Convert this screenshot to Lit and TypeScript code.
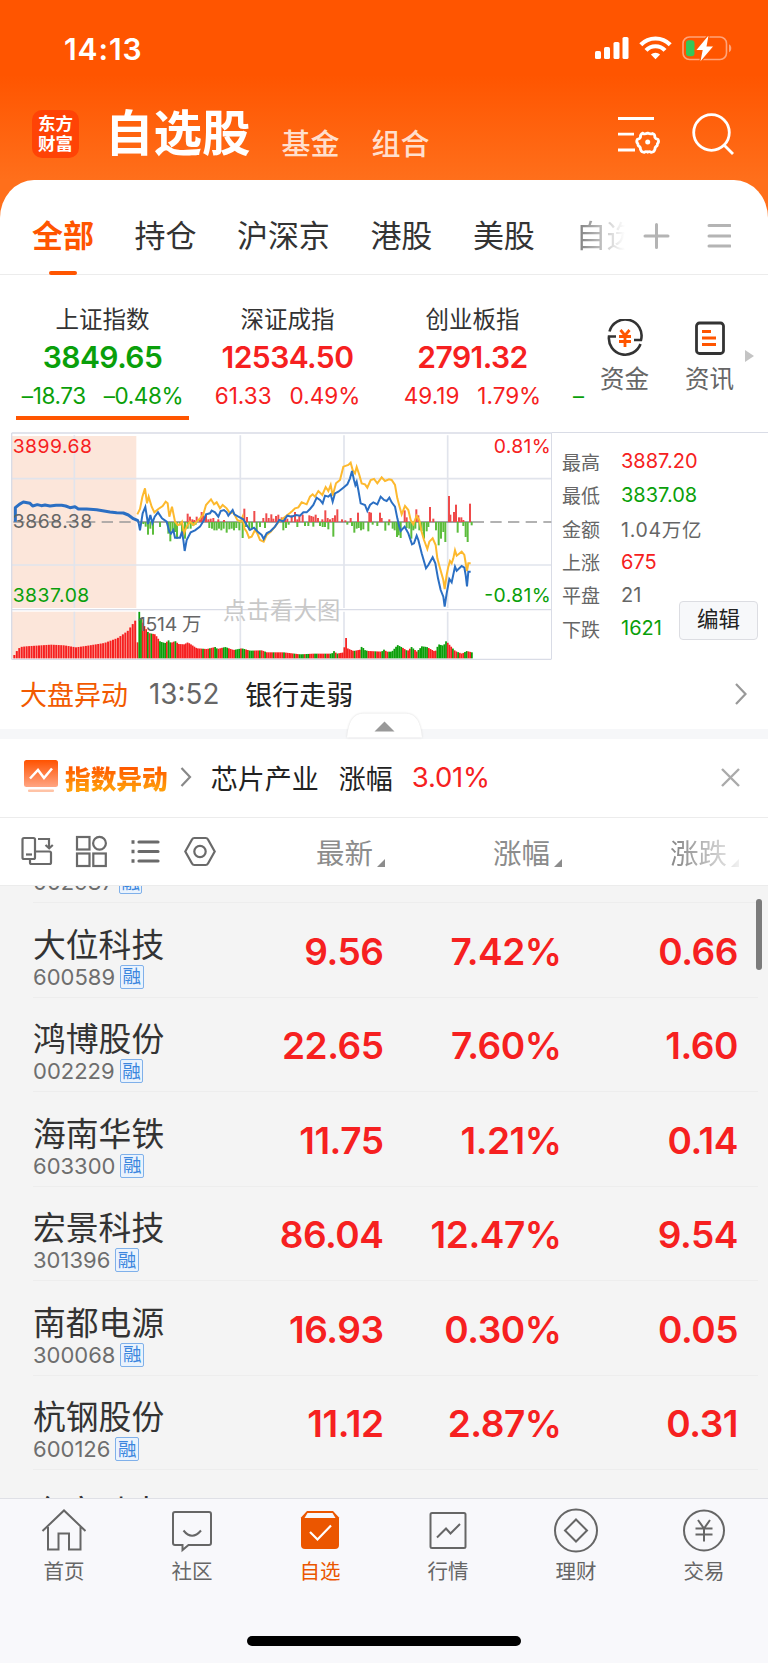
import { LitElement, html, svg, css } from "lit";
import { customElement } from "lit/decorators.js";

const sharedText = css`
  :host { font-family: Inter, "Noto Sans CJK SC", sans-serif; }
  .up { color: #f62020; }
  .down { color: #0a9f0a; }
`;

type Pair = [number, number];

const PRE_LINE = "46,290 46,248 58,238 70,231 90,235 98,243 112,239 124,242 135,240 150,243 168,241 185,241 197,243 210,248 225,245 235,252 260,252 290,254 330,261 350,263 370,264 385,270 400,281 414,287";
const BLUE_LINE = "414,284 420,316 428,265 436,246 444,297 451,270 457,294 464,275 474,262 486,280 500,290 508,320 513,326 520,315 525,338 540,338 546,320 550,345 554,378 560,345 572,322 585,316 600,305 612,285 618,268 630,265 635,257 645,262 655,275 662,258 672,255 680,262 685,272 698,255 703,268 715,275 730,283 740,300 750,315 762,308 775,322 785,330 791,342 800,325 812,318 825,305 838,285 850,289 862,272 875,275 888,270 900,272 910,262 920,262 930,252 940,240 950,218 960,225 968,235 975,212 985,215 992,208 998,230 1005,205 1015,200 1030,188 1042,178 1050,160 1056,138 1062,165 1066,180 1070,170 1075,195 1082,235 1095,240 1102,258 1110,240 1120,232 1132,238 1142,215 1152,225 1160,228 1168,218 1175,232 1185,245 1192,280 1198,305 1202,318 1214,305 1225,325 1236,358 1242,355 1250,332 1255,345 1265,385 1278,430 1285,420 1298,397 1306,415 1314,460 1322,495 1330,515 1334,545 1340,505 1348,462 1355,472 1365,425 1370,437 1385,423 1393,428 1397,450 1401,484 1405,440 1412,440";
const GOLD_LINE = "412,268 420,252 427,216 435,190 441,235 446,215 455,245 463,262 475,252 488,243 497,230 503,235 508,275 516,245 525,290 533,300 540,298 546,290 552,325 560,305 570,290 580,300 590,290 600,280 610,268 618,240 625,232 633,223 642,238 650,232 660,250 668,240 680,250 690,265 700,262 712,285 722,290 728,275 733,310 740,320 747,338 755,335 765,315 772,325 780,345 791,350 800,330 812,320 825,305 838,288 850,280 862,270 870,264 877,258 885,250 895,247 905,232 920,238 930,215 938,208 945,215 955,198 967,210 977,186 985,198 992,180 998,212 1008,175 1020,165 1030,125 1045,120 1052,113 1058,135 1065,145 1070,126 1078,150 1085,175 1095,178 1102,188 1112,165 1122,162 1132,175 1145,157 1155,168 1167,163 1175,165 1185,180 1192,220 1200,250 1205,268 1215,243 1225,255 1232,285 1240,298 1250,272 1258,285 1265,320 1272,345 1282,372 1288,350 1298,340 1307,360 1312,400 1320,430 1330,465 1334,492 1340,450 1345,425 1350,408 1355,415 1360,400 1365,376 1370,392 1385,380 1393,390 1401,438 1405,415 1412,415";

const FLOW: Pair[] = [
  [563,25],[570,16],[577,8],[583,6],[590,16],[600,8],[605,30],[610,20],[618,24],[625,8],[632,10],[640,12],[655,8],[672,6],[720,6],[733,40],[741,15],[763,33],[790,12],[799,26],[806,12],[814,23],[820,10],[828,18],[835,22],[845,14],[855,15],[862,10],[875,20],
  [430,-6],[437,-14],[444,-38],[451,-20],[459,-38],[480,-15],[505,-35],[511,-58],[518,-25],[525,-30],[531,-50],[540,-10],[546,-35],[555,-50],[563,-20],[572,-20],[580,-12],[587,-8],[628,-18],[636,-20],[643,-25],[650,-25],[657,-20],[664,-25],[671,-20],[680,-32],[688,-22],[695,-20],[702,-25],[709,-18],[718,-25],[728,-48],[738,-15],[748,-25],[756,-20],[770,-30],[780,-15],[795,-18],[850,-25],[858,-18],[866,-8],[892,-15],
  [885,30],[892,8],[898,18],[908,22],[928,20],[934,18],[940,16],[947,22],[954,12],[967,8],[976,35],[983,12],[990,8],[998,12],[1005,20],[1012,38],[1026,8],[1036,5],[1052,12],[1074,28],[1108,30],[1113,28],[1140,28],[1145,12],[1168,8],[1214,35],[1220,14],[1249,38],[1255,20],[1290,45],[1300,10],[1347,78],[1351,22],[1362,30],[1368,52],[1377,14],[1384,14],[1390,6],[1410,55],
  [915,-12],[925,-12],[940,-14],[960,-12],[968,-15],[975,-15],[985,-22],[1000,-44],[1042,-8],[1056,-12],[1063,-32],[1070,-20],[1076,-18],[1083,-25],[1090,-22],[1105,-28],[1118,-8],[1132,-12],[1156,-26],[1166,-10],[1178,-20],[1184,-25],[1191,-45],[1196,-40],[1202,-48],[1220,-18],[1228,-20],[1234,-50],[1240,-25],[1246,-20],[1258,-25],[1265,-28],[1272,-50],[1280,-28],[1285,-15],[1308,-25],[1316,-70],[1323,-50],[1330,-30],[1336,-60],[1373,-32],[1390,-12],[1397,-45],[1403,-60],[1415,-10],
];

const PRE_VOLUME: Pair[] = [[40,10],[50,26],[58,34],[75,36],[150,41],[190,39],[225,33],[260,38],[310,46],[350,61],[380,82],[407,119]];
const VOLUME: Pair[] = [[412,48],[417,140],[425,112],[435,92],[445,76],[465,72],[480,50],[495,46],[505,54],[512,46],[525,52],[535,43],[552,42],[563,48],[590,30],[620,28],[645,34],[652,28],[675,34],[700,25],[725,30],[750,23],[785,24],[800,18],[850,18],[900,12],[940,14],[995,14],[1001,22],[1010,14],[1031,18],[1036,72],[1042,30],[1060,22],[1080,26],[1085,36],[1095,24],[1105,22],[1145,20],[1150,27],[1160,20],[1175,20],[1192,40],[1207,32],[1222,22],[1234,34],[1250,20],[1265,36],[1280,34],[1305,20],[1315,42],[1330,38],[1338,52],[1350,38],[1365,22],[1385,14],[1400,22],[1415,18]];
const GREEN_RUNS: Pair[] = [[415,427],[435,438],[442,446],[452,456],[478,500],[505,514],[523,528],[553,557],[608,612],[628,633],[645,655],[667,682],[705,720],[726,735],[745,760],[775,781],[790,796],[818,824],[848,856],[880,884],[896,912],[918,925],[945,955],[975,980],[990,1003],[1010,1014],[1062,1068],[1080,1102],[1125,1130],[1145,1152],[1165,1207],[1218,1222],[1230,1240],[1255,1282],[1310,1338],[1358,1362],[1372,1376],[1392,1403],[1412,1420]];

function heightAt(series: Pair[], x: number): number {
  for (let i = 1; i < series.length; i++) {
    const [x1, h1] = series[i];
    if (x <= x1) {
      const [x0, h0] = series[i - 1];
      return h0 + ((h1 - h0) * (x - x0)) / (x1 - x0);
    }
  }
  return series[series.length - 1][1];
}

function steps(from: number, to: number, step: number): number[] {
  const out: number[] = [];
  for (let x = from; x <= to; x += step) out.push(x);
  return out;
}

@customElement("minute-chart")
class MinuteChart extends LitElement {
  static styles = css`
    :host { display: block; width: 543px; height: 228px; font-family: Inter, "Noto Sans CJK SC", sans-serif; }
    svg { display: block; }
    .grid { stroke: #e1e4ec; stroke-width: 5; }
    .axis { stroke: #d9dce6; stroke-width: 4; }
    .label { font-size: 58px; }
    .mark { font-size: 70px; fill: #c8c8c8; }
    .up { fill: #f62020; }
    .down { fill: #0a9f0a; }
    .plain { fill: #666; }
  `;
  render() {
    return html`<svg width="543" height="228" viewBox="27 21 1629 684">
      <rect x="36" y="33" width="373" height="516" fill="#fce6da"/>
      <rect x="36" y="560" width="373" height="140" fill="#fce6da"/>
      ${[223, 721, 1032, 1343].map((x) => svg`<path class="grid" d=${`M${x} 31V549M${x} 560V700`}/>`)}
      ${[161, 420].map((y) => svg`<path class="grid" d=${`M35 ${y}H1654`}/>`)}
      <path class="axis" d="M35 24H1656M35 554H1654M35 703H1654M35 24V703M1655 24V703"/>
      <path d="M40 291H414" stroke="#999" stroke-width="5" stroke-dasharray="34 19"/>
      <path d="M414 291H1418" stroke="#888" stroke-width="4"/>
      <path d="M1418 291H1654" stroke="#999" stroke-width="5" stroke-dasharray="34 19"/>
      ${FLOW.map(([x, v]) => svg`<rect x=${x - 3} y=${v > 0 ? 291 - v : 291} width="6" height=${Math.abs(v)} fill=${v > 0 ? "#ef4b4b" : "#5cbd3c"}/>`)}
      ${steps(40, 403, 7.4).map((x) => svg`<rect x=${x} y=${700 - heightAt(PRE_VOLUME, x)} width="6" height=${heightAt(PRE_VOLUME, x)} fill="#f62020"/>`)}
      ${steps(410, 1415, 5.17).map((x) => {
        const h = heightAt(VOLUME, x + 2);
        const green = GREEN_RUNS.some(([a, b]) => x + 2.5 >= a && x + 2.5 <= b);
        return svg`<rect x=${x} y=${700 - h} width="5.3" height=${h} fill=${green ? "#0a9f0a" : "#f62020"}/>`;
      })}
      <polyline points=${GOLD_LINE} fill="none" stroke="#fdb92e" stroke-width="6"/>
      <polyline points=${BLUE_LINE} fill="none" stroke="#2b6fc3" stroke-width="6"/>
      <polyline points=${PRE_LINE} fill="none" stroke="#2b6fc3" stroke-width="9" stroke-linejoin="round"/>
      <text class="label up" x="38" y="84" textLength="238">3899.68</text>
      <text class="label plain" x="38" y="308" textLength="239">3868.38</text>
      <text class="label down" x="38" y="532" textLength="230">3837.08</text>
      <text class="label up" x="1481" y="84" textLength="171">0.81%</text>
      <text class="label down" x="1453" y="532" textLength="199">-0.81%</text>
      <text class="label plain" x="414" y="618" textLength="190">1514 万</text>
      <text class="mark" x="669" y="582" textLength="352">点击看大图</text>
    </svg>`;
  }
}

@customElement("status-header")
class StatusHeader extends LitElement {
  static styles = [sharedText, css`
    :host { display: block; color: #fff; height: 180px; }
    .status { display: flex; justify-content: space-between; align-items: center; height: 98px; padding: 0 36px 0 64px; box-sizing: border-box; }
    .time { font-size: 30px; font-weight: 600; letter-spacing: 0.9px; }
    .bar { display: flex; align-items: flex-end; height: 62px; padding: 0 32px; }
    .logo { width: 47px; height: 48px; border-radius: 10px; background: #ff4306; display: grid; place-content: center; font-size: 17.5px; line-height: 20px; font-weight: 700; margin-bottom: 2px; }
    .title { font-size: 48.500px; line-height: 52px; font-weight: 700; margin-left: 26px; }
    .link { font-size: 29px; line-height: 30px; font-weight: 500; color: #ffdfcd; margin-left: 32px; }
    .title + .link { margin-left: 31px; }
    .tools { margin-left: auto; margin-bottom: 5px; }
    svg { display: block; }
  `];
  render() {
    return html`
      <div class="status">
        <span class="time">14:13</span>
        <svg width="138" height="26" viewBox="0 0 138 26" fill="#fff">
          <rect x="1" y="15" width="6" height="8" rx="1.6"/><rect x="10" y="11" width="6" height="12" rx="1.6"/>
          <rect x="19.500" y="6" width="6" height="17" rx="1.6"/><rect x="28.500" y="1" width="6" height="22" rx="1.6"/>
          <g fill="none" stroke="#fff" stroke-width="4.200">
            <path d="M46.800 8.700a20.500 20.500 0 0 1 29.400 0"/><path d="M52 14.400a13 13 0 0 1 19 0"/>
          </g>
          <path d="M61.500 23.200l-4.600-4.600a6.700 6.700 0 0 1 9.200 0z"/>
          <rect x="89" y="1" width="43.500" height="22.500" rx="6.500" fill="none" stroke="#ffa47a" stroke-width="1.600"/>
          <path d="M135 8.300c3 1.200 3 6.800 0 8z" fill="#ffa47a"/>
          <rect x="92" y="4.300" width="8.500" height="16" rx="3" fill="#34c759"/>
          <path d="M114.500-.5l-12 14.500h6.200l-2.200 11.200 12.500-14.700h-6.500z" stroke="#ff5a02" stroke-width="2.400" paint-order="stroke"/>
        </svg>
      </div>
      <div class="bar">
        <div class="logo"><span>东方</span><span>财富</span></div>
        <span class="title">自选股</span><span class="link">基金</span><span class="link">组合</span>
        <svg class="tools" width="118" height="42" viewBox="0 0 118 42" fill="none" stroke="#fff" stroke-width="2.800">
          <path d="M0 5.500H36M0 21.200H16M0 37H17"/>
          <path d="M24.800 20.500q2.200 1 4.900-.4 2.700 1.400 4.900.4 2.500.7 2.300 4 .6 1.400 3 1.800 1.500 2.700-.5 4.500.1 1-.4 2-2 .6-2.100 3.600-1 3-3.700 2.900-1.800-1.300-3.500-.1-1.800-1.200-3.500.1-2.700.1-3.700-2.900 0-3-2.100-3.600-.6-1-.5-2-2-1.800-.5-4.500 2.400-.4 3-1.800-.2-3.300 2.400-4.400z" stroke-linejoin="round"/>
          <circle cx="29.700" cy="29" r="2.500" fill="#fff" stroke="none"/>
          <circle cx="93.500" cy="19.500" r="17.800"/><path d="M106 32l9 9"/>
        </svg>
      </div>`;
  }
}

@customElement("group-tabs")
class GroupTabs extends LitElement {
  static styles = [sharedText, css`
    :host { display: flex; align-items: center; height: 95px; box-sizing: border-box; border-bottom: 1.500px solid #ececec; padding: 0 36px 0 32px; background: #fff; border-radius: 34px 34px 0 0 / 38px 38px 0 0; color: #333; font-size: 31px; line-height: 44px; }
    .tab { margin-right: 40.700px; letter-spacing: -0.1px; height: 95px; padding-top: 34px; box-sizing: border-box; display: flex; flex-direction: column; align-items: center; }
    .on { color: #ff5500; font-weight: 700; }
    .on::after { content: ""; width: 28px; height: 4px; border-radius: 2px; background: #ff5500; margin-top: 13px; }
    .faded { width: 50px; margin-right: 18px; overflow: hidden; white-space: nowrap; align-items: flex-start; background: linear-gradient(90deg, #777, #fff); -webkit-background-clip: text; background-clip: text; color: transparent; }
    .actions { margin-top: 17px; }
  `];
  render() {
    return html`
      <span class="tab on">全部</span><span class="tab">持仓</span><span class="tab">沪深京</span>
      <span class="tab">港股</span><span class="tab">美股</span><span class="tab faded">自选</span>
      <svg class="actions" width="88" height="28" viewBox="0 0 88 28" fill="none" stroke="#b4b4b4" stroke-width="3" stroke-linecap="round">
        <path d="M2 14H25M13.500 2.500V25.500M66 3.500H87M66 14H87M66 24H87"/>
      </svg>`;
  }
}

const INDICES = [
  { name: "上证指数", value: "3849.65", diff: "–18.73", pct: "–0.48%", dir: "down", on: true },
  { name: "深证成指", value: "12534.50", diff: "61.33", pct: "0.49%", dir: "up", on: false },
  { name: "创业板指", value: "2791.32", diff: "49.19", pct: "1.79%", dir: "up", on: false },
];

@customElement("index-strip")
class IndexStrip extends LitElement {
  static styles = [sharedText, css`
    :host { display: flex; height: 157px; padding: 0 14px 0 16px; box-sizing: border-box; }
    .card { width: 173px; margin-right: 12px; padding-top: 29px; height: 145px; box-sizing: border-box; display: flex; flex-direction: column; align-items: center; white-space: nowrap; border-bottom: 4px solid transparent; }
    .sel { border-color: #ff5500; }
    .name { font-size: 23.500px; line-height: 32px; color: #333; }
    .value { font-size: 30px; line-height: 40px; font-weight: 600; margin-top: 1px; letter-spacing: -0.55px; }
    .delta { display: flex; gap: 18px; font-size: 22.500px; line-height: 30px; margin-top: 4px; }
    .delta.down { letter-spacing: -0.4px; }
    .cut { width: 10px; font-size: 22px; line-height: 30px; margin: 106px 0 0 2px; }
    .tool { display: flex; flex-direction: column; align-items: center; gap: 4px; margin-top: 44px; font-size: 24.500px; line-height: 36px; color: #666; }
    .tools { display: flex; gap: 36px; margin-left: 17px; }
    .next { margin: 75px 0 0 auto; }
    svg { display: block; }
  `];
  render() {
    return html`
      ${INDICES.map((i) => html`<div class="card ${i.on ? "sel" : ""}">
        <span class="name">${i.name}</span><span class="value ${i.dir}">${i.value}</span>
        <span class="delta ${i.dir}"><span>${i.diff}</span><span>${i.pct}</span></span>
      </div>`)}
      <span class="cut down">–</span>
      <div class="tools">
        <div class="tool">
          <svg width="38" height="38" viewBox="0 0 38 38" fill="none" stroke="#333" stroke-width="2.600">
            <path d="M3.500 12.500A16.300 16.300 0 0 1 35 21h-7M34.500 25A16.300 16.300 0 0 1 3 17.500h7"/>
            <path d="M14.500 11l4.500 5.500 4.500-5.500M13 17.500h12M13 22.500h12M19 16v12" stroke="#ff5500" stroke-width="2.800"/>
          </svg>资金
        </div>
        <div class="tool">
          <svg width="38" height="38" viewBox="0 0 38 38" fill="none" stroke="#333" stroke-width="2.800">
            <rect x="5.500" y="4" width="27" height="30.500" rx="3"/>
            <path d="M11 12.500h9M11 19h14M11 25.500h14" stroke="#ff5500" stroke-width="3"/>
          </svg>资讯
        </div>
      </div>
      <svg class="next" width="9" height="12" viewBox="0 0 9 12"><path d="M0 0l9 6-9 6z" fill="#c4c4c4"/></svg>`;
  }
}

const STATS = [
  ["最高", "3887.20", "up"], ["最低", "3837.08", "down"], ["金额", "1.04万亿", "mixed"],
  ["上涨", "675", "up"], ["平盘", "21", ""], ["下跌", "1621", "down"],
];

@customElement("market-panel")
class MarketPanel extends LitElement {
  static styles = [sharedText, css`
    :host { display: flex; height: 228px; padding-left: 9px; }
    .side { position: relative; flex: 1; border-top: 1.500px solid #d9dce6; padding: 11.500px 0 0 10px; box-sizing: border-box; }
    .row { display: flex; align-items: center; height: 33.450px; color: #666; font-size: 20px; }
    .key { width: 59px; font-size: 19px; }
    .mixed { font-size: 19.500px; letter-spacing: 0.7px; }
    .edit { position: absolute; left: 127px; top: 168px; width: 79px; height: 39px; box-sizing: border-box; border: 1.500px solid #dcdde2; border-radius: 4px; background: #f7f8fa; color: #222; font-size: 21.500px; line-height: 32px; padding-top: 0.500px; text-align: center; }
  `];
  render() {
    return html`<minute-chart></minute-chart>
      <div class="side">
        ${STATS.map(([k, v, c]) => html`<div class="row"><span class="key">${k}</span><span class=${c}>${v}</span></div>`)}
        <div class="edit">编辑</div>
      </div>`;
  }
}

@customElement("news-block")
class NewsBlock extends LitElement {
  static styles = [sharedText, css`
    :host { display: block; }
    .line { display: flex; align-items: center; box-sizing: border-box; color: #222; font-size: 27px; }
    .news { height: 69px; padding: 0 21px 2px 20px; }
    .tag { color: #f25a00; }
    .time { color: #666; font-size: 27.800px; margin: 0 26px 0 21px; }
    .end { margin-left: auto; }
    .band { position: relative; height: 10px; background: #f6f7f9; }
    .fold { position: absolute; left: 346px; bottom: 1px; filter: drop-shadow(0 0 1px #d8d8d8); }
    .alert { height: 78px; padding: 0 28px 2px 24px; }
    .title { font-size: 25.700px; font-weight: 900; background: linear-gradient(#ff5a00 25%, #ff9d0a 80%); -webkit-background-clip: text; background-clip: text; color: transparent; margin: 0 12px 0 7px; }
    .topic { margin: 0 20px 0 19px; }
    .pct { margin-left: 19px; font-size: 27.500px; letter-spacing: -0.2px; }
    svg { display: block; }
  `];
  render() {
    return html`
      <div class="line news"><span class="tag">大盘异动</span><span class="time">13:52</span><span>银行走弱</span>
        <svg class="end" width="12" height="22" viewBox="0 0 12 22" fill="none" stroke="#999" stroke-width="2.200"><path d="M1 1l9.500 10L1 21"/></svg>
      </div>
      <div class="band">
        <svg class="fold" width="77" height="25" viewBox="0 0 77 25">
          <path d="M1 24.500q2-24 16-24H60q14 0 16 24z" fill="#fff"/><path d="M28.500 18.500L38.500 8.500l10 10z" fill="#999"/>
        </svg>
      </div>
      <div class="line alert">
        <svg width="34" height="34" viewBox="0 0 34 34">
          <defs><linearGradient id="g" x1="0" y1="0" x2="0" y2="1"><stop offset="0" stop-color="#ff5200"/><stop offset="1" stop-color="#ffa583"/></linearGradient></defs>
          <rect width="34" height="27" rx="2.500" fill="url(#g)"/><rect x="4" y="29.500" width="26" height="2.500" rx="1" fill="#ffc3a6"/>
          <path d="M6 18.500l8-8.500 6 8 8-9.500" fill="none" stroke="#fff" stroke-width="2.500"/>
        </svg>
        <span class="title">指数异动</span>
        <svg width="12" height="20" viewBox="0 0 12 20" fill="none" stroke="#888" stroke-width="2.200"><path d="M1.500 1l8.500 9-8.500 9"/></svg>
        <span class="topic">芯片产业</span><span>涨幅</span><span class="pct up">3.01%</span>
        <svg class="end" width="19" height="19" viewBox="0 0 19 19" stroke="#aaa" stroke-width="2.400"><path d="M1 1l17 17M18 1L1 18"/></svg>
      </div>`;
  }
}

@customElement("list-toolbar")
class ListToolbar extends LitElement {
  static styles = [sharedText, css`
    :host { display: grid; grid-template-columns: 230px 122px 177px 177px; align-items: center; height: 68px; box-sizing: border-box; border-top: 1.500px solid #ececec; padding-left: 33px; font-size: 28.500px; color: #8c8c8c; }
    .icons { margin: 1px 0 0 -13px; display: block; }
    .head { display: flex; justify-content: flex-end; align-items: flex-end; gap: 4px; line-height: 34px; padding-top: 4px; }
    .head svg { margin-bottom: 4px; }
    .fade { -webkit-mask-image: linear-gradient(90deg, #000 65%, transparent 105%); mask-image: linear-gradient(90deg, #000 65%, transparent 105%); }
  `];
  render() {
    return html`
      <svg class="icons" width="200" height="34" viewBox="0 0 200 34" fill="none" stroke="#6a6a6a" stroke-width="2.200">
        <rect x="2.500" y="3" width="12.500" height="21" rx="1.500"/><path d="M6 19.500h6"/>
        <path d="M18 4h11v9M25.500 10l3.700 3.300L32.800 10M15 16.500h14.500q1.500 0 1.500 1.500v9.500q0 1.500-1.500 1.500H11.500q-1.500 0-1.500-1.500V24"/>
        <rect x="57" y="2" width="12.500" height="12.500"/><circle cx="79.500" cy="8.200" r="6.400"/>
        <rect x="57" y="18.500" width="12.500" height="12.500"/><rect x="73.300" y="18.500" width="12.500" height="12.500"/>
        <path d="M119 7H138M119 16.500H138M119 26H138" stroke-width="3.200" stroke-linecap="round"/>
        <path d="M113 5.300v3.400M113 14.800v3.400M113 24.300v3.400" stroke-width="3"/>
        <path d="M165.300 16.500L172 4.500q.8-1.500 2.300-1.500h11.400q1.500 0 2.300 1.500L194.700 16.500 188 28.500q-.8 1.500-2.300 1.500h-11.400q-1.500 0-2.300-1.500z"/>
        <circle cx="180" cy="16.500" r="5.700"/>
      </svg>
      ${["最新", "涨幅", "涨跌"].map((t, i) => html`<span class="head ${i === 2 ? "fade" : ""}">${t}<svg width="8" height="8" viewBox="0 0 8 8"><path d="M8 0V8H0z" fill="#8c8c8c"/></svg></span>`)}`;
  }
}

const STOCKS = [
  ["京北方", "002987", "18.52", "3.12%", "0.56"],
  ["大位科技", "600589", "9.56", "7.42%", "0.66"],
  ["鸿博股份", "002229", "22.65", "7.60%", "1.60"],
  ["海南华铁", "603300", "11.75", "1.21%", "0.14"],
  ["宏景科技", "301396", "86.04", "12.47%", "9.54"],
  ["南都电源", "300068", "16.93", "0.30%", "0.05"],
  ["杭钢股份", "600126", "11.12", "2.87%", "0.31"],
  ["东安动力", "600178", "12.40", "1.06%", "0.13"],
];

@customElement("stock-list")
class StockList extends LitElement {
  static styles = [sharedText, css`
    :host { display: block; position: relative; height: 613px; overflow: hidden; background: #f4f4f4; border-top: 1px solid #ececec; box-sizing: border-box; }
    .rows { margin-top: -77.500px; }
    .row { display: grid; grid-template-columns: 230px 120.500px 178px 176.500px; height: 94.500px; box-sizing: border-box; border-bottom: 1.500px solid #ededed; margin: 0 10px 0 33px; }
    .name { font-size: 32.800px; line-height: 40px; color: #333; margin-top: 21.500px; white-space: nowrap; }
    .code { display: flex; align-items: center; gap: 5px; font-size: 22px; line-height: 24px; color: #6e6e6e; }
    .badge { width: 23.500px; height: 24px; box-sizing: border-box; border: 1.500px solid #7fb0ea; border-radius: 2px; background: #eaf3fd; color: #3b86de; font-size: 18.500px; line-height: 21px; display: grid; place-content: center; }
    .num { font-size: 37px; line-height: 44px; font-weight: 600; text-align: right; margin-top: 26.500px; letter-spacing: -0.45px; }
    .thumb { position: absolute; right: 6px; top: 13px; width: 6px; height: 71px; border-radius: 3px; background: #7b7b7b; }
  `];
  render() {
    return html`<div class="rows">
      ${STOCKS.map(([name, code, ...nums]) => html`<div class="row">
        <div><div class="name">${name}</div><div class="code"><span>${code}</span><span class="badge">融</span></div></div>
        ${nums.map((n) => html`<span class="num up">${n}</span>`)}
      </div>`)}
    </div><div class="thumb"></div>`;
  }
}

const NAV = [
  ["首页", svg`<path d="M1.500 23L23 2.500 44.500 23M7 19V41.500H17.500V25.500H28V41.500H39.500V19"/>`],
  ["社区", svg`<path d="M6 4H40q2 0 2 2V35q0 2-2 2H19.500l-6 5V37H6q-2 0-2-2V6q0-2 2-2zM14.500 22.500q8.500 10.500 17.500 0"/>`],
  ["自选", svg`<path d="M10 3H36l6 6.500V37q0 4-4 4H8q-4 0-4-4V9.500z" fill="#eb5600" stroke="none"/><path d="M10.500 5H35.500l3 5H7.500z" fill="#f8f8fb" stroke="none"/><path d="M13 24l7.500 7.500L34 17.500" stroke="#fff" stroke-width="2.200"/>`],
  ["行情", svg`<rect x="5.500" y="5" width="35" height="35" rx="1.500"/><path d="M12 29.500l9-9 4.500 5L35 16"/>`],
  ["理财", svg`<circle cx="23" cy="22.500" r="21"/><path d="M23 11.500l11 11-11 11-11-11z"/>`],
  ["交易", svg`<circle cx="23" cy="22.500" r="20"/><path d="M17 12l6 8.500L29 12M23 20.500V33.500M14.500 20.500h17M14.500 26.500h17"/>`],
] as const;

@customElement("bottom-nav")
class BottomNav extends LitElement {
  static styles = [sharedText, css`
    :host { display: flex; flex-direction: column; align-items: center; justify-content: space-between; height: 165px; box-sizing: border-box; border-top: 1.500px solid #dfe0e6; background: #f8f8fb; padding-bottom: 17px; }
    .items { display: grid; grid-template-columns: repeat(6, 1fr); width: 100%; padding-top: 9px; }
    .item { display: flex; flex-direction: column; align-items: center; font-size: 20.500px; line-height: 28px; color: #666; gap: 4px; }
    .on { color: #eb5600; }
    .home { width: 274px; height: 10px; border-radius: 5px; background: #000; }
    svg { display: block; }
  `];
  render() {
    return html`<div class="items">
      ${NAV.map(([label, icon], i) => html`<div class="item ${i === 2 ? "on" : ""}">
        <svg width="46" height="46" viewBox="0 0 46 46" fill="none" stroke="#666" stroke-width="2">${icon}</svg>${label}
      </div>`)}
    </div><div class="home"></div>`;
  }
}

@customElement("app-root")
class AppRoot extends LitElement {
  static styles = css`
    :host { display: block; width: 768px; height: 1663px; overflow: hidden; background: linear-gradient(#ff5500 0, #ff5500 75px, #ff6f1b 180px, #ff6f1b 225px, #fff 225px); }
  `;
  render() {
    return html`<status-header></status-header><group-tabs></group-tabs><index-strip></index-strip>
      <market-panel></market-panel><news-block></news-block><list-toolbar></list-toolbar>
      <stock-list></stock-list><bottom-nav></bottom-nav>`;
  }
}
